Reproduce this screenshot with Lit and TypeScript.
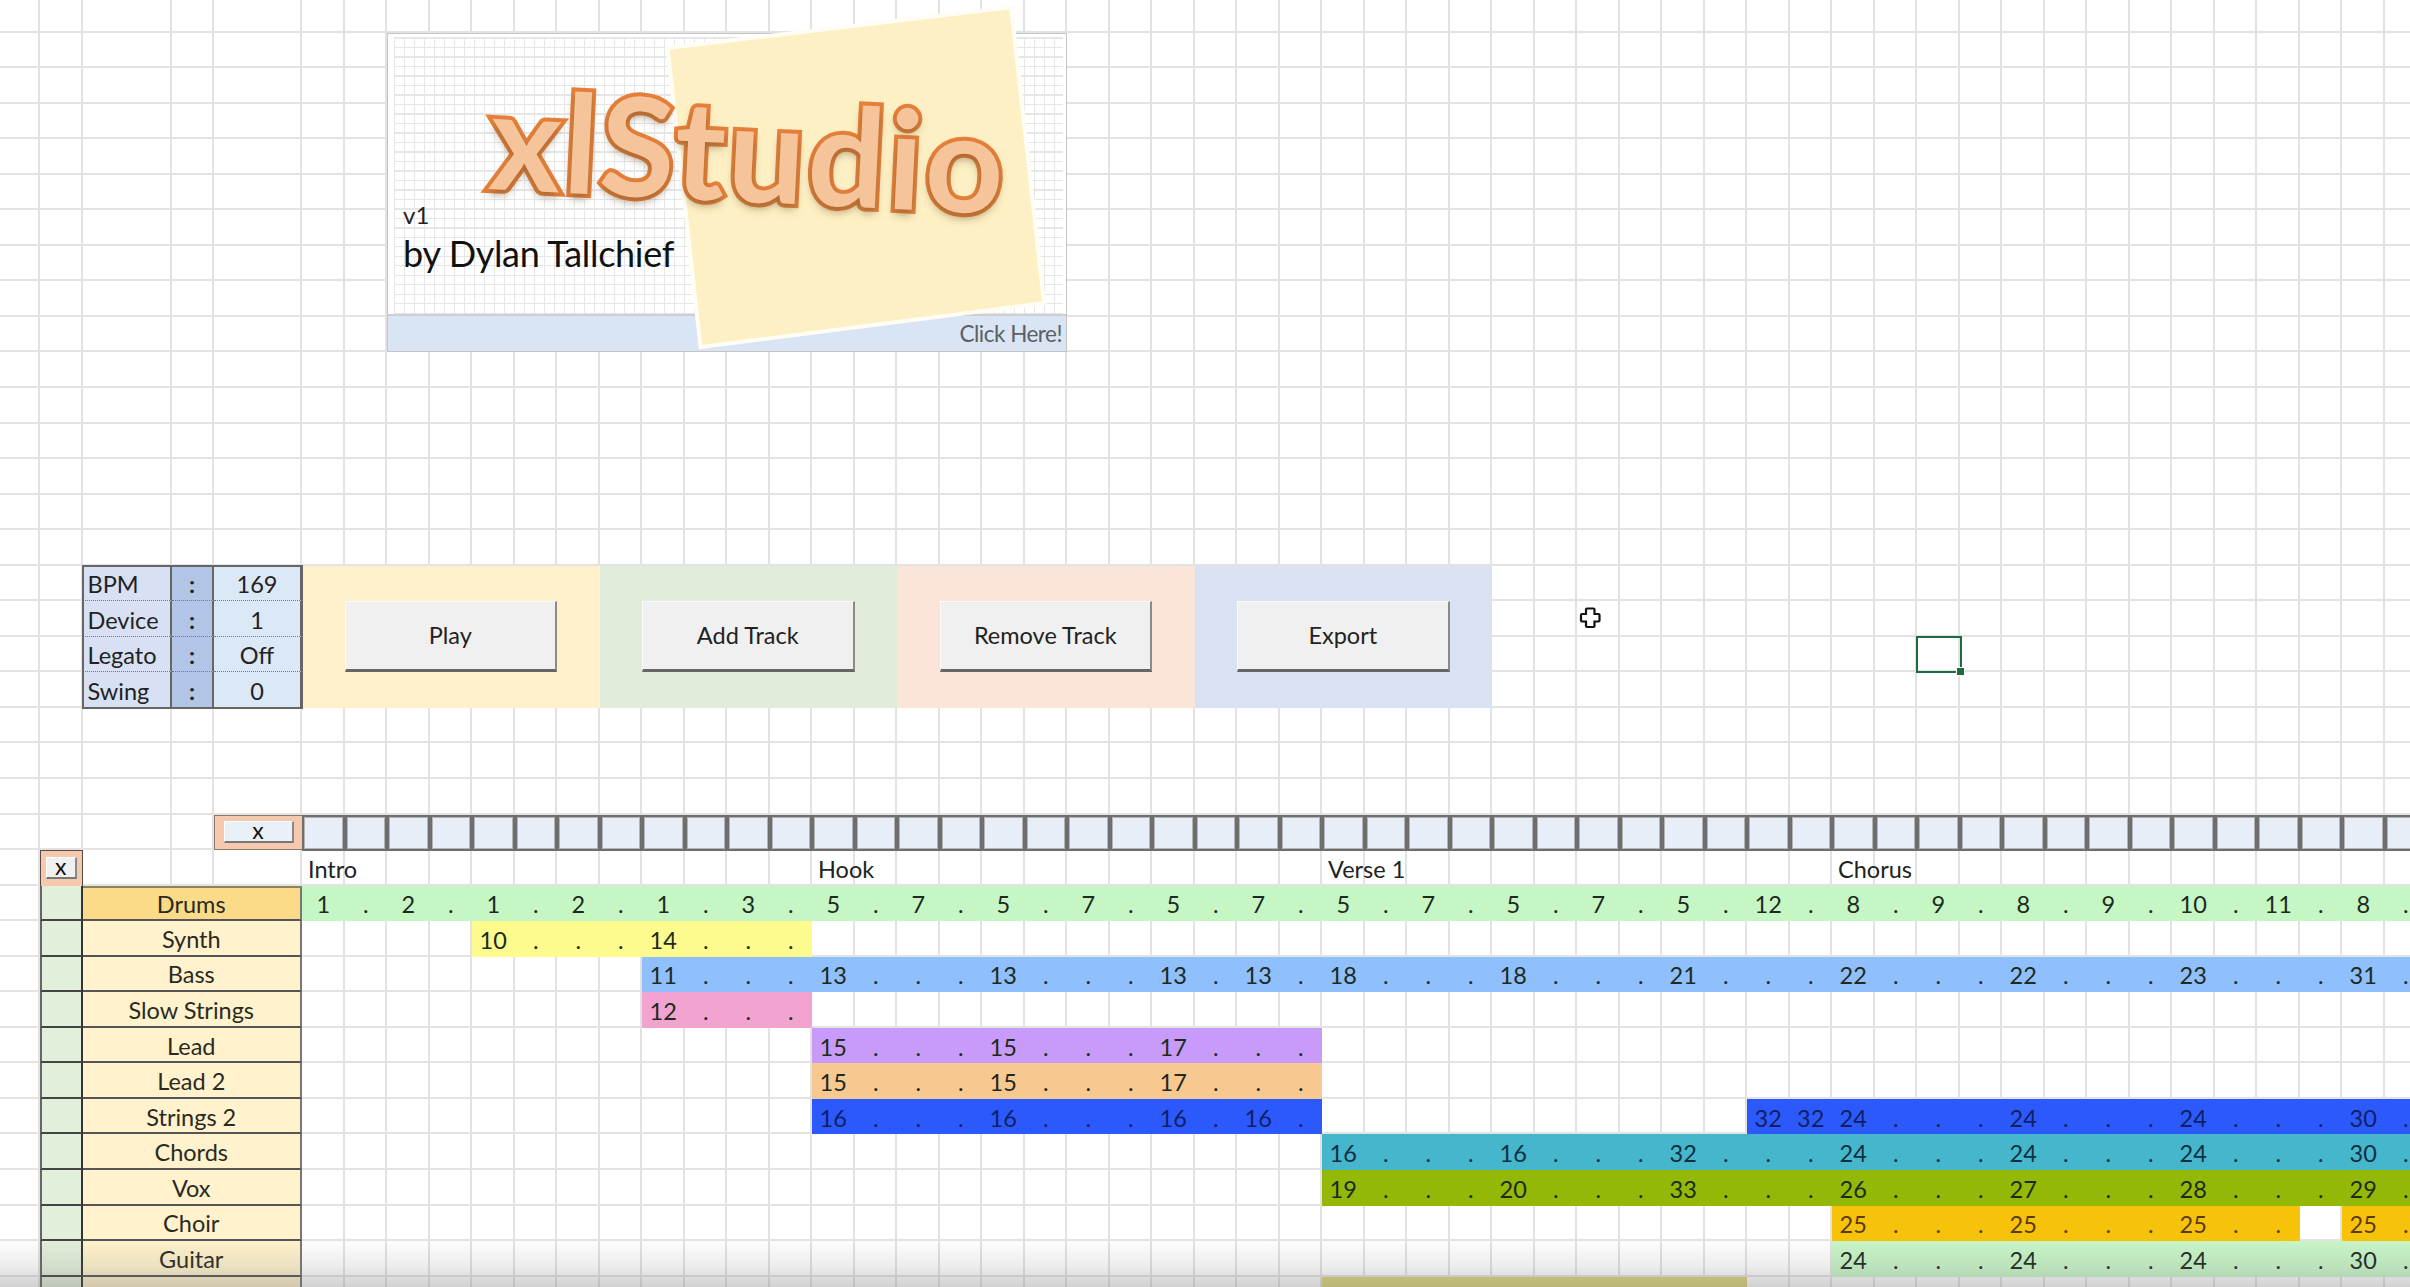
import { LitElement, html, css } from "lit";
import { customElement } from "lit/decorators.js";

type Seg = { start: number; text: string; color: string; ink?: string };
type Track = { name: string; active?: boolean; segs: Seg[] };

const COLS = 50;
const ROWS = 36;
const TRACK_COL = 6; // first grid column of the timeline
const TRACK_ROW = 26; // first grid row of the track list

const tracks: Track[] = [
  { name: "Drums", active: true, segs: [{ start: 0, color: "#c6f6c4", text: "1 . 2 . 1 . 2 . 1 . 3 . 5 . 7 . 5 . 7 . 5 . 7 . 5 . 7 . 5 . 7 . 5 . 12 . 8 . 9 . 8 . 9 . 10 . 11 . 8 ." }] },
  { name: "Synth", segs: [{ start: 4, color: "#fdfb8e", text: "10 . . . 14 . . ." }] },
  { name: "Bass", segs: [{ start: 8, color: "#8fbffc", text: "11 . . . 13 . . . 13 . . . 13 . 13 . 18 . . . 18 . . . 21 . . . 22 . . . 22 . . . 23 . . . 31 ." }] },
  { name: "Slow Strings", segs: [{ start: 8, color: "#f3a3cf", text: "12 . . ." }] },
  { name: "Lead", segs: [{ start: 12, color: "#c89bfa", text: "15 . . . 15 . . . 17 . . ." }] },
  { name: "Lead 2", segs: [{ start: 12, color: "#f7c88f", text: "15 . . . 15 . . . 17 . . ." }] },
  { name: "Strings 2", segs: [
    { start: 12, color: "#2b59fb", ink: "#101f66", text: "16 . . . 16 . . . 16 . 16 ." },
    { start: 34, color: "#2b59fb", ink: "#101f66", text: "32 32 24 . . . 24 . . . 24 . . . 30 ." },
  ] },
  { name: "Chords", segs: [{ start: 24, color: "#45b6cc", ink: "#10303f", text: "16 . . . 16 . . . 32 . . . 24 . . . 24 . . . 24 . . . 30 ." }] },
  { name: "Vox", segs: [{ start: 24, color: "#93b805", text: "19 . . . 20 . . . 33 . . . 26 . . . 27 . . . 28 . . . 29 ." }] },
  { name: "Choir", segs: [
    { start: 36, color: "#f6c30a", ink: "#5a3a10", text: "25 . . . 25 . . . 25 . ." },
    { start: 48, color: "#f6c30a", ink: "#5a3a10", text: "25 ." },
  ] },
  { name: "Guitar", segs: [{ start: 36, color: "#c8f5c8", text: "24 . . . 24 . . . 24 . . . 30 ." }] },
  { name: "", segs: [{ start: 24, color: "#ddd67c", text: "" }] },
];

const controls = [
  ["BPM", "169"],
  ["Device", "1"],
  ["Legato", "Off"],
  ["Swing", "0"],
];

const actions = [
  ["Play", "#fdf0cb"],
  ["Add Track", "#e2ecda"],
  ["Remove Track", "#fbe5d8"],
  ["Export", "#d9e2f3"],
];

const sections = [
  ["Intro", 0],
  ["Hook", 12],
  ["Verse 1", 24],
  ["Chorus", 36],
] as const;

@customElement("app-root")
export class AppRoot extends LitElement {
  static styles = css`
    :host {
      display: block;
      position: relative;
      width: 2410px;
      height: 1287px;
      overflow: hidden;
      background: #fff;
      font-family: Lato, "Liberation Sans", sans-serif;
      font-size: 23.5px;
      color: #222;
    }
    .sheet {
      display: grid;
      grid-template-columns: 40px 42.5px 89.5px 42px 88px repeat(50, 42.5px);
      grid-template-rows: 32.5px repeat(36, 35.55px);
      width: max-content;
    }
    .vline { grid-row: 1 / -1; border-right: 2px solid #e2e2e2; }
    .hline { grid-column: 1 / -1; border-bottom: 2px solid #e3e3e3; }

    /* logo picture */
    .logo {
      grid-column: 8 / span 16;
      grid-row: 2 / span 9;
      position: relative;
      border: 1px solid #c4c4c4;
      box-sizing: border-box;
      background: #fff;
      display: flex;
      flex-direction: column;
      justify-content: flex-end;
    }
    .mesh {
      flex: 1;
      margin: 3px 3px 0 6px;
      background-image:
        repeating-linear-gradient(90deg, #e6e6e6 0 1px, transparent 1px 10px),
        repeating-linear-gradient(0deg, #e6e6e6 0 1px, transparent 1px 9.5px);
    }
    .banner {
      height: 35px;
      background: #d9e5f4;
      border-top: 2px solid #cfcfcf;
      display: flex;
      justify-content: flex-end;
      align-items: center;
      padding-right: 4px;
    }
    .click { position: relative; z-index: 2; font-size: 22.5px; color: #5b5f66; letter-spacing: -0.5px; }
    .note { position: absolute; left: 0; top: 0; width: 100%; height: 100%; overflow: visible; }
    .title {
      position: absolute;
      left: 99px;
      top: 34px;
      font-size: 137px;
      font-weight: 700;
      line-height: 1;
      white-space: nowrap;
      letter-spacing: 2.5px;
      color: #f6c49b;
      -webkit-text-stroke: 8px #e8813a;
      paint-order: stroke fill;
      text-shadow: 0 5px 8px rgba(110, 80, 40, 0.5);
      transform: rotate(2.8deg);
      transform-origin: left bottom;
    }
    .version { position: absolute; left: 15px; top: 166px; font-size: 24px; color: #222; }
    .author { position: absolute; left: 15px; top: 197px; font-size: 36px; color: #111; white-space: nowrap; letter-spacing: -0.3px; }

    /* settings table */
    .controls {
      grid-column: 3 / 6;
      grid-row: 17 / 21;
      display: grid;
      grid-template-columns: subgrid;
      grid-template-rows: subgrid;
      position: relative;
      z-index: 1;
      outline: 2px solid #666;
      outline-offset: -1px;
    }
    .controls > div {
      display: flex;
      align-items: center;
      padding-top: 2px;
      border-bottom: 1.5px dotted #777;
      border-right: 2px solid #666;
      box-sizing: border-box;
    }
    .controls > div.last { border-bottom: none; }
    .c-label { background: #d7e1f3; padding-left: 5px; }
    .c-sep { background: #b2c5e6; justify-content: center; font-weight: 700; }
    .c-val { background: #dbe8f6; justify-content: center; }

    .panel {
      grid-row: 17 / 21;
      display: flex;
      align-items: center;
      justify-content: center;
    }
    .action {
      width: 212.5px;
      height: 71px;
      box-sizing: border-box;
      background: #f0f0f0;
      border: none;
      border-top: 1.5px solid #fafafa;
      border-left: 1.5px solid #fafafa;
      border-right: 2px solid #8a8a8a;
      border-bottom: 3px solid #666;
      font: inherit;
      color: #222;
      padding: 0 0 2px;
    }

    /* toolbar */
    .clear-all {
      grid-column: 5;
      grid-row: 24;
      background: #f4c9ae;
      border: 1.5px solid #8d7a6e;
      border-right: none;
      display: flex;
      align-items: center;
      justify-content: center;
    }
    .clear-tracks {
      grid-column: 2;
      grid-row: 25;
      background: #f4c9ae;
      border: 1.5px solid #5c4a40;
      border-bottom: none;
      display: flex;
      align-items: center;
      justify-content: center;
    }
    .mini {
      box-sizing: border-box;
      height: 22px;
      background: #eaf0f8;
      border: none;
      border-top: 1.5px solid #fff;
      border-left: 1.5px solid #fff;
      border-right: 2px solid #8a8a8a;
      border-bottom: 2.5px solid #777;
      font: inherit;
      font-size: 23px;
      line-height: 14px;
      padding: 0 0 4px;
      color: #111;
    }
    .mini.wide { width: 70px; }
    .mini.small { width: 31px; background: #f0f0f0; }
    .toggle {
      grid-row: 24;
      background: #e8eef8;
      border: 2px solid #6e6e6e;
      box-shadow: inset 0 0 0 1px #b4b4b4;
      margin-bottom: -1px;
    }

    .section {
      grid-row: 25;
      grid-column-end: span 3;
      padding: 2px 0 0 6px;
      display: flex;
      align-items: center;
      color: #222;
    }

    /* track list */
    .mute {
      grid-column: 2;
      background: #e2efda;
      border-left: 2px solid #666;
      border-right: 2px solid #333;
      border-bottom: 2px solid #444;
      box-sizing: border-box;
    }
    .name {
      grid-column: 3 / 6;
      background: #fff2cc;
      border-right: 2px solid #777;
      border-bottom: 2px solid #555;
      box-sizing: border-box;
      display: flex;
      align-items: center;
      justify-content: center;
      padding-top: 2px;
      color: #2a2a22;
    }
    .name.active { background: #fbdb88; border-top: 2px solid #8d8464; }
    .seg {
      display: grid;
      grid-template-columns: subgrid;
      align-items: center;
      justify-items: center;
      min-width: 0;
      padding-top: 2px;
    }
    .seg span { white-space: nowrap; }

    /* selection and pointer */
    .selected {
      grid-column: 44;
      grid-row: 19;
      position: relative;
      border: 2.5px solid #1f6b40;
      box-sizing: border-box;
      margin: -1px -2px -1px -1px;
    }
    .handle {
      position: absolute;
      right: -5px;
      bottom: -5px;
      width: 7px;
      height: 7px;
      background: #1f6b40;
      border: 1px solid #fff;
    }
    .pointer { position: absolute; left: 1579px; top: 606px; width: 23px; height: 23px; }
    .fade {
      position: absolute;
      left: 0;
      right: 0;
      bottom: 0;
      height: 48px;
      background: linear-gradient(to bottom, rgba(110, 110, 110, 0), rgba(110, 110, 110, 0.14) 60%, rgba(110, 110, 110, 0.32));
      pointer-events: none;
    }
  `;

  private cols() {
    return Array.from({ length: 5 + COLS }, (_, i) => i + 1);
  }
  private rows() {
    return Array.from({ length: ROWS + 1 }, (_, i) => i + 1);
  }
  private seg(seg: Seg, row: number) {
    const cells = seg.text ? seg.text.split(" ") : ["", ""];
    const col = TRACK_COL + seg.start;
    const span = seg.text ? cells.length : 10;
    return html`<div
      class="seg"
      style="grid-column:${col} / span ${span};grid-row:${row};background:${seg.color};color:${seg.ink ?? "#1c2a20"}"
    >
      ${cells.map((c) => html`<span>${c}</span>`)}
    </div>`;
  }

  render() {
    return html`
      <div class="sheet">
        ${this.cols().map((c) => html`<div class="vline" style="grid-column:${c}"></div>`)}
        ${this.rows().map((r) => html`<div class="hline" style="grid-row:${r}"></div>`)}

        <div class="logo">
          <div class="mesh"></div>
          <div class="banner"><span class="click">Click Here!</span></div>
          <svg class="note" viewBox="0 0 679 320" preserveAspectRatio="none">
            <polygon points="280,14 624,-27 657,271 313,315" fill="#fdf0c4" stroke="#fffdf4" stroke-width="4" />
          </svg>
          <div class="version">v1</div>
          <div class="author">by Dylan Tallchief</div>
          <div class="title">xlStudio</div>
        </div>

        <div class="controls">
          ${controls.map(([k, v], i) => {
            const last = i === controls.length - 1 ? "last" : "";
            return html`
              <div class="c-label ${last}">${k}</div>
              <div class="c-sep ${last}">:</div>
              <div class="c-val ${last}">${v}</div>
            `;
          })}
        </div>
        ${actions.map(
          ([label, bg], i) => html`<div
            class="panel"
            style="grid-column:${TRACK_COL + i * 7} / span 7;background:${bg}"
          >
            <button class="action">${label}</button>
          </div>`
        )}

        <div class="clear-all"><button class="mini wide">x</button></div>
        ${Array.from(
          { length: COLS },
          (_, i) => html`<div class="toggle" style="grid-column:${TRACK_COL + i}"></div>`
        )}

        <div class="clear-tracks"><button class="mini small">x</button></div>
        ${sections.map(
          ([label, c]) => html`<div class="section" style="grid-column-start:${TRACK_COL + c}">${label}</div>`
        )}

        ${tracks.map((t, i) => {
          const row = TRACK_ROW + i;
          return html`
            <div class="mute" style="grid-row:${row}"></div>
            <div class="name ${t.active ? "active" : ""}" style="grid-row:${row}">${t.name}</div>
            ${t.segs.map((s) => this.seg(s, row))}
          `;
        })}

        <div class="selected"><div class="handle"></div></div>
      </div>

      <svg class="pointer" viewBox="0 0 23 23">
        <path
          d="M8 2.5h6.5a1 1 0 0 1 1 1V8h4a1 1 0 0 1 1 1v5.5a1 1 0 0 1-1 1h-4V20a1 1 0 0 1-1 1H8a1 1 0 0 1-1-1v-4.500H3a1 1 0 0 1-1-1V9a1 1 0 0 1 1-1h4V3.500a1 1 0 0 1 1-1z"
          fill="#fff"
          stroke="#111"
          stroke-width="2.2"
        />
      </svg>
      <div class="fade"></div>
    `;
  }
}
